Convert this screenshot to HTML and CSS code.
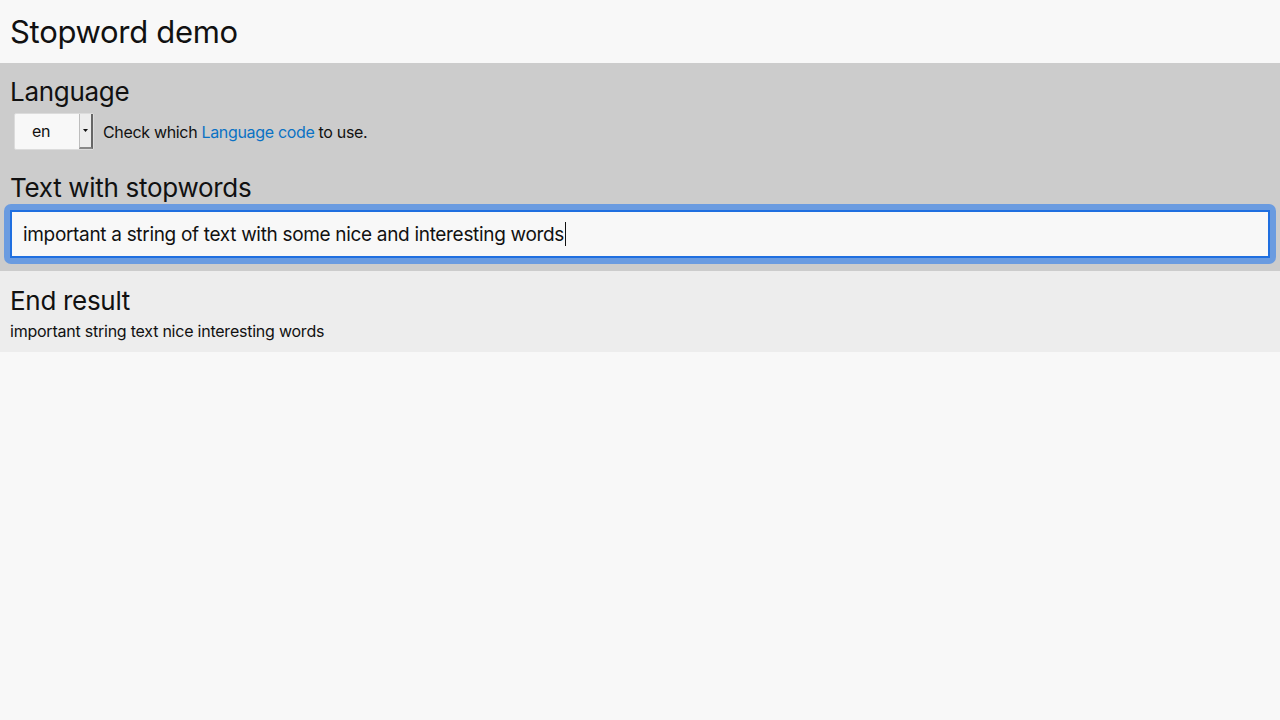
FILE: index.html
```html
<!DOCTYPE html>
<html>
<head>
<meta charset="utf-8">
<link rel="stylesheet" href="styles.css">
</head>
<body>
<header class="top">
  <h1 class="title">Stopword demo</h1>
</header>
<section class="panel input-panel">
  <h2 class="heading">Language</h2>
  <div class="lang-row">
    <div class="select">
      <span class="select-value">en</span>
      <span class="select-arrow"><svg width="5" height="3" viewBox="0 0 5 3"><path d="M0 0h5L2.5 3z" fill="#111"/></svg></span>
    </div>
    <span class="hint">Check which <a class="link" href="#">Language code</a> to use.</span>
  </div>
  <h2 class="heading heading-gap">Text with stopwords</h2>
  <div class="field-ring">
    <div class="field">important a string of text with some nice and interesting words<span class="caret"></span></div>
  </div>
</section>
<section class="panel result-panel">
  <h2 class="heading">End result</h2>
  <p class="result">important string text nice interesting words</p>
</section>
</body>
</html>
```
FILE: styles.css
```css
html, body {
  margin: 0;
  padding: 0;
  background: #f8f8f8;
  font-family: Inter, "Noto Sans", sans-serif;
  color: #111;
}
.top {
  height: 63px;
  display: flex;
  align-items: center;
  padding: 0 10px;
}
.title {
  margin: 0;
  font-size: 31px;
  font-weight: 400;
  letter-spacing: -0.3px;
}
.input-panel {
  background: #cccccc;
  padding: 13px 10px 7px;
}
.result-panel {
  background: #ededed;
  padding: 14px 10px 10px;
}
.heading {
  margin: 0;
  font-size: 26px;
  font-weight: 400;
  line-height: 32px;
  letter-spacing: -0.3px;
}
.heading-gap {
  margin-top: 22px;
}
.lang-row {
  display: flex;
  align-items: center;
  margin-top: 5px;
  padding-left: 4px;
  height: 37px;
}
.select {
  display: flex;
  width: 80px;
  height: 37px;
  box-sizing: border-box;
  border: 1px solid #dcdcdc;
  border-radius: 2px;
  background: #f8f8f8;
}
.select-value {
  width: 52px;
  text-align: center;
  font-size: 16px;
  line-height: 35px;
  letter-spacing: -0.3px;
}
.select-arrow {
  margin-left: auto;
  width: 14px;
  background: #ededed;
  border-left: 1px solid #bdbdbd;
  border-right: 2px solid #666;
  border-bottom: 2px solid #888;
  box-sizing: border-box;
  display: flex;
  align-items: center;
  justify-content: center;
}
.hint {
  margin-left: 9px;
  font-size: 16px;
  letter-spacing: -0.33px;
}
.link {
  color: #0a72c4;
  text-decoration: none;
}
.field-ring {
  margin: 0 -6px;
  padding: 6px;
  background: #6a9be0;
  border-radius: 7px;
}
.field {
  background: #f8f8f8;
  border: 2px solid #1f6fe0;
  height: 48px;
  box-sizing: border-box;
  padding: 0 11px;
  font-size: 19px;
  letter-spacing: -0.32px;
  display: flex;
  align-items: center;
  white-space: nowrap;
}
.caret {
  display: inline-block;
  width: 1px;
  height: 24px;
  background: #111;
  margin-left: 1px;
}
.result {
  margin: 3px 0 0;
  font-size: 16px;
  line-height: 22px;
  letter-spacing: -0.23px;
}
```
